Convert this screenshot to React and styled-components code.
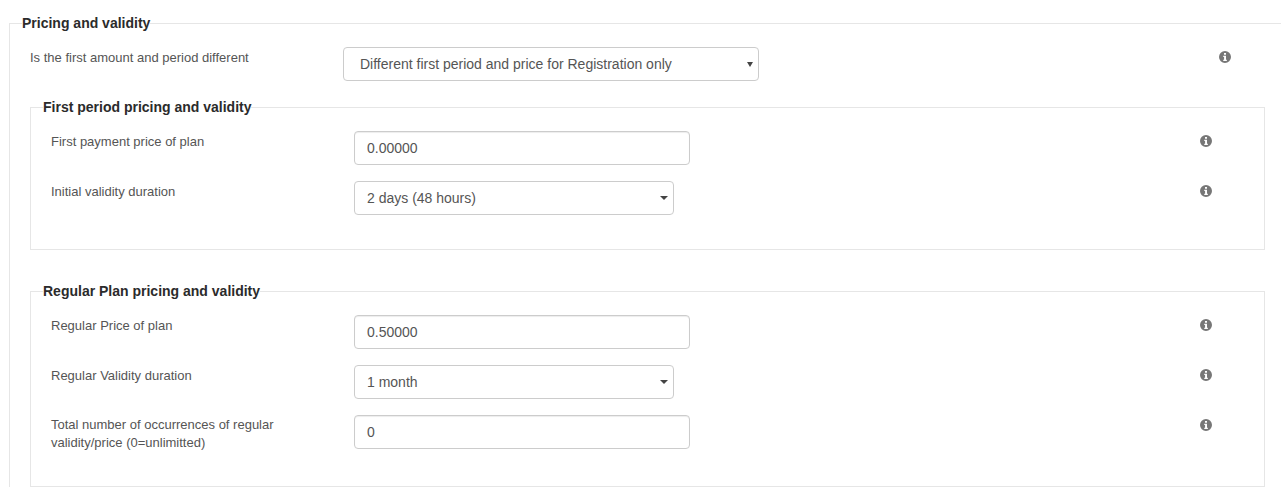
import React from 'react';
import styled, { createGlobalStyle } from 'styled-components';

const GlobalStyle = createGlobalStyle`
  html, body {
    margin: 0;
    height: 491px;
    overflow: hidden;
    background: #fff;
  }
  * { box-sizing: border-box; }
  body {
    font-family: "Liberation Sans", Arial, sans-serif;
    font-size: 14px;
    color: #333;
  }
`;

const Page = styled.div`
  padding: 13px 0 0 9px;
  margin-right: -4px;
`;

const OuterSet = styled.fieldset`
  margin: 0;
  padding: 0 4px 0 20px;
  border: 1px solid #e6e6e6;
  border-bottom: 0;
  min-width: 0;
`;

const InnerSet = styled.fieldset`
  margin: ${(p) => p.$top}px 0 0 0;
  padding: 0 0 ${(p) => p.$bottom}px 20px;
  border: 1px solid #e6e6e6;
  width: 1235px;
  min-width: 0;
`;

const Legend = styled.legend`
  padding: 0;
  margin-left: ${(p) => p.$indent}px;
  font-size: 14px;
  line-height: 20px;
  font-weight: 700;
  color: #2b2b2b;
`;

const Row = styled.div`
  display: grid;
  grid-template-columns: ${(p) => p.$label}px ${(p) => p.$control}px 1fr 13px;
  margin-top: ${(p) => p.$top}px;
  padding-right: ${(p) => p.$right}px;
`;

const Label = styled.label`
  font-size: 13px;
  line-height: 18px;
  color: #555;
  padding-top: ${(p) => p.$pad}px;
`;

const Control = styled.div`
  position: relative;
  width: ${(p) => p.$width}px;
  height: 34px;
`;

const TextInput = styled.input`
  display: block;
  width: 100%;
  height: 34px;
  padding: 6px 12px;
  font: 14px/20px "Liberation Sans", Arial, sans-serif;
  color: #555;
  background: #fff;
  border: 1px solid #ccc;
  border-radius: 4px;
  box-shadow: inset 0 1px 1px rgba(0, 0, 0, 0.075);
`;

const Select = styled.select`
  display: block;
  width: 100%;
  height: 34px;
  padding: 0 ${(p) => p.$pad}px;
  font: 14px "Liberation Sans", Arial, sans-serif;
  color: #555;
  background: #fff;
  border: 1px solid #ccc;
  border-radius: 4px;
  appearance: none;
`;

const Caret = styled.span`
  position: absolute;
  top: ${(p) => p.$top}px;
  right: ${(p) => p.$right}px;
  width: 0;
  height: 0;
  border-left: ${(p) => p.$size}px solid transparent;
  border-right: ${(p) => p.$size}px solid transparent;
  border-top: ${(p) => p.$drop}px solid #444;
  pointer-events: none;
`;

const Info = styled.svg`
  display: block;
  width: 12px;
  height: 12px;
  margin-top: 4px;
  fill: #777;
`;

const InfoIcon = () => (
  <Info viewBox="0 0 13 13" aria-hidden="true">
    <path
      fillRule="evenodd"
      d="M6.5 0a6.5 6.5 0 1 0 0 13a6.5 6.5 0 0 0 0-13ZM5.4 2.2h2.2v1.9H5.4ZM4.6 5.2h3v4.2h.9v1.3H4.6V9.4h.9V6.5h-.9Z"
    />
  </Info>
);

const TextRow = ({ label, value, top, pad = 2 }) => (
  <Row $label={303} $control={336} $top={top} $right={51}>
    <Label $pad={pad}>{label}</Label>
    <Control $width={336}>
      <TextInput type="text" defaultValue={value} />
    </Control>
    <span />
    <InfoIcon />
  </Row>
);

const SelectRow = ({ label, value }) => (
  <Row $label={303} $control={336} $top={16} $right={51}>
    <Label $pad={2}>{label}</Label>
    <Control $width={320}>
      <Select $pad={12} defaultValue={value}>
        <option>{value}</option>
      </Select>
      <Caret $top={15} $right={6} $size={4} $drop={4} />
    </Control>
    <span />
    <InfoIcon />
  </Row>
);

export default function App() {
  return (
    <Page>
      <GlobalStyle />
      <OuterSet>
        <Legend $indent={-8}>Pricing and validity</Legend>
        <Row $label={313} $control={416} $top={14} $right={48}>
          <Label $pad={2}>Is the first amount and period different</Label>
          <Control $width={416}>
            <Select $pad={16} defaultValue="Different first period and price for Registration only">
              <option>Different first period and price for Registration only</option>
            </Select>
            <Caret $top={15} $right={6} $size={3} $drop={5} />
          </Control>
          <span />
          <InfoIcon />
        </Row>

        <InnerSet $top={16} $bottom={34}>
          <Legend $indent={-8}>First period pricing and validity</Legend>
          <TextRow top={14} label="First payment price of plan" value="0.00000" />
          <SelectRow label="Initial validity duration" value="2 days (48 hours)" />
        </InnerSet>

        <InnerSet $top={31} $bottom={34}>
          <Legend $indent={-8}>Regular Plan pricing and validity</Legend>
          <TextRow top={14} label="Regular Price of plan" value="0.50000" />
          <SelectRow label="Regular Validity duration" value="1 month" />
          <TextRow
            top={16}
            pad={1}
            label={<>Total number of occurrences of regular<br />validity/price (0=unlimitted)</>}
            value="0"
          />
        </InnerSet>
      </OuterSet>
    </Page>
  );
}
